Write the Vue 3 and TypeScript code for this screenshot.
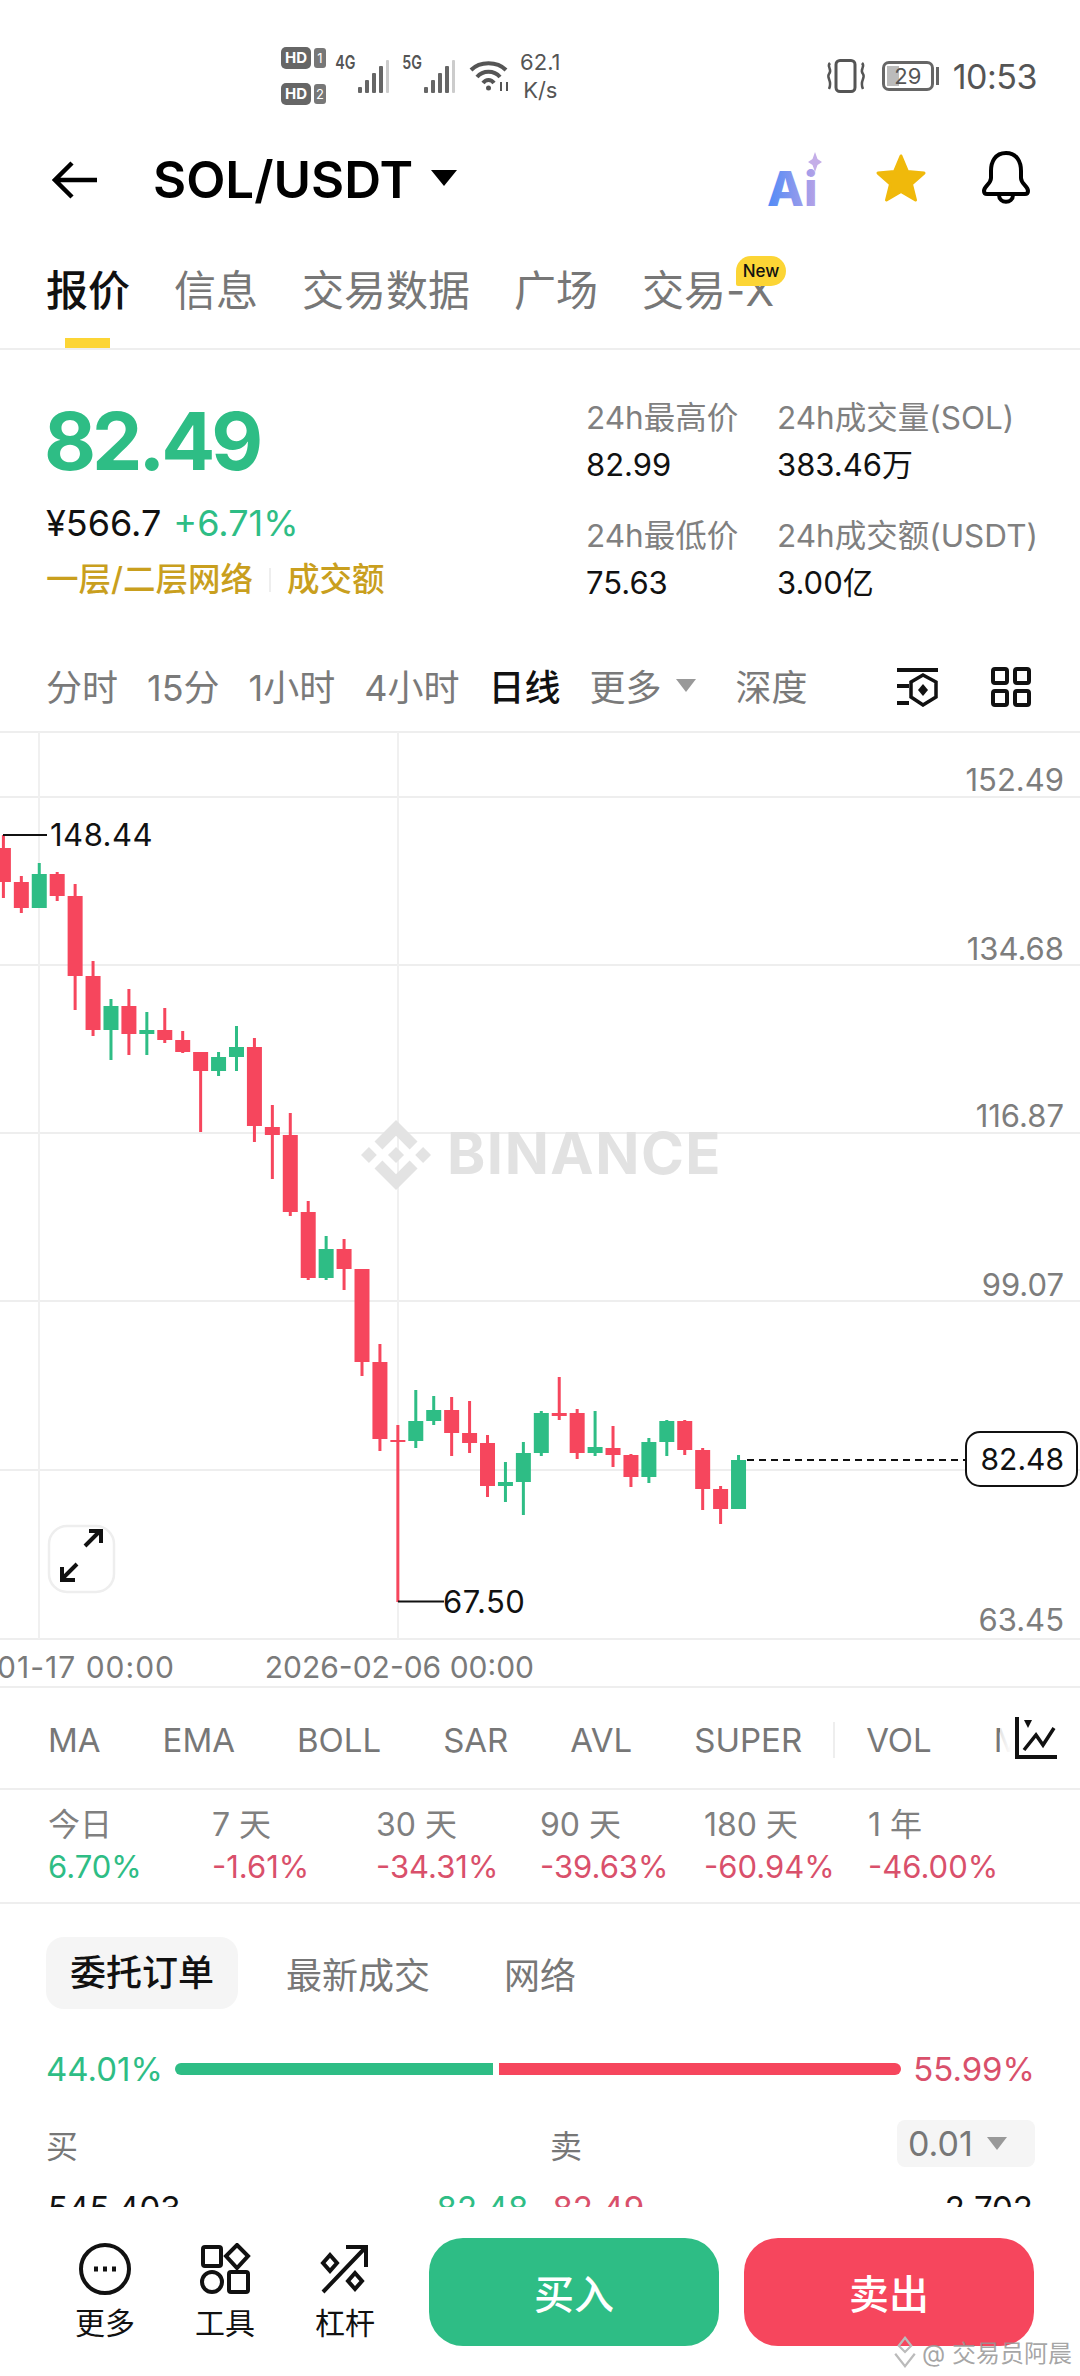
<script setup lang="ts">
type Candle = [number, number, number, number, number]

const tabs = ['报价', '信息', '交易数据', '广场', '交易-X']
const frames = ['分时', '15分', '1小时', '4小时', '日线']
const indicators = ['MA', 'EMA', 'BOLL', 'SAR', 'AVL', 'SUPER']
const periods = [
  { label: '今日', value: '6.70%', up: true },
  { label: '7 天', value: '-1.61%', up: false },
  { label: '30 天', value: '-34.31%', up: false },
  { label: '90 天', value: '-39.63%', up: false },
  { label: '180 天', value: '-60.94%', up: false },
  { label: '1 年', value: '-46.00%', up: false },
]
const stats = [
  { label: '24h最高价', value: '82.99' },
  { label: '24h成交量(SOL)', value: '383.46万' },
  { label: '24h最低价', value: '75.63' },
  { label: '24h成交额(USDT)', value: '3.00亿' },
]

const gridY = [797, 965, 1133, 1301, 1470, 1639]
const axis = [
  { y: 791, text: '152.49' },
  { y: 960, text: '134.68' },
  { y: 1127, text: '116.87' },
  { y: 1296, text: '99.07' },
  { y: 1631, text: '63.45' },
]

// high, body top, body bottom, low, 1 = green
const candles: Candle[] = [
  [835, 848, 882, 898, 0], [876, 882, 908, 913, 0], [863, 874, 908, 908, 1], [872, 874, 896, 901, 0],
  [884, 896, 976, 1010, 0], [961, 976, 1030, 1036, 0], [999, 1006, 1030, 1060, 1], [989, 1006, 1034, 1055, 0],
  [1012, 1030, 1034, 1055, 1], [1008, 1030, 1040, 1043, 0], [1031, 1040, 1052, 1053, 0], [1052, 1052, 1071, 1132, 0],
  [1052, 1057, 1071, 1076, 1], [1026, 1047, 1057, 1071, 1], [1038, 1047, 1126, 1142, 0], [1105, 1127, 1135, 1179, 0],
  [1113, 1135, 1212, 1216, 0], [1201, 1212, 1278, 1280, 0], [1236, 1249, 1278, 1280, 1], [1239, 1249, 1269, 1290, 0],
  [1269, 1269, 1362, 1376, 0], [1344, 1362, 1439, 1451, 0], [1425, 1440, 1442, 1602, 0], [1390, 1421, 1441, 1448, 1],
  [1396, 1410, 1421, 1425, 1], [1397, 1410, 1433, 1456, 0], [1401, 1433, 1443, 1453, 0], [1435, 1443, 1486, 1497, 0],
  [1462, 1482, 1486, 1502, 1], [1442, 1453, 1482, 1515, 1], [1411, 1413, 1453, 1456, 1], [1377, 1413, 1416, 1420, 0],
  [1409, 1413, 1453, 1459, 0], [1411, 1447, 1453, 1456, 1], [1426, 1448, 1455, 1467, 0], [1454, 1455, 1477, 1487, 0],
  [1438, 1442, 1477, 1483, 1], [1420, 1421, 1442, 1456, 1], [1420, 1421, 1450, 1455, 0], [1448, 1450, 1489, 1510, 0],
  [1486, 1489, 1509, 1524, 0], [1455, 1460, 1509, 1509, 1],
]
const cx = (i: number) => 3.4 + i * 17.93
const col = (c: Candle) => (c[4] ? '#2ebd85' : '#f6465d')
</script>

<template>
  <div class="page">
    <div class="main">
      <div class="status">
        <div class="hd-col">
          <div class="hd-row"><span class="hd">HD</span><span class="sim">1</span></div>
          <div class="hd-row"><span class="hd">HD</span><span class="sim">2</span></div>
        </div>
        <span class="net n1">4G</span>
        <svg class="bars" width="34" height="34" viewBox="0 0 32 34">
          <rect x="0" y="27" width="4" height="6" rx="1" fill="#666" />
          <rect x="7" y="20" width="4" height="13" rx="1" fill="#666" />
          <rect x="14" y="13" width="4" height="20" rx="1" fill="#666" />
          <rect x="21" y="6" width="4" height="27" rx="1" fill="#666" />
          <rect x="28" y="0" width="3" height="33" rx="1" fill="#ccc" />
        </svg>
        <span class="net n2">5G</span>
        <svg class="bars" width="34" height="34" viewBox="0 0 32 34">
          <rect x="0" y="27" width="4" height="6" rx="1" fill="#666" />
          <rect x="7" y="20" width="4" height="13" rx="1" fill="#666" />
          <rect x="14" y="13" width="4" height="20" rx="1" fill="#666" />
          <rect x="21" y="6" width="4" height="27" rx="1" fill="#666" />
          <rect x="28" y="0" width="3" height="33" rx="1" fill="#ccc" />
        </svg>
        <svg class="wifi" width="42" height="34" viewBox="0 0 42 34" fill="none" stroke="#555" stroke-width="4">
          <path d="M2 12C11 3 28 3 37 12" />
          <path d="M8 19C14 12 25 12 31 19" />
          <path d="M14 25C17 21 22 21 25 25" />
          <circle cx="19.500" cy="30" r="2.500" fill="#555" stroke="none" />
          <path d="M32 33V24M38 33V24" stroke-width="2" />
        </svg>
        <div class="speed"><span>62.1</span><span>K/s</span></div>
        <div class="status-right">
          <svg class="vib" width="42" height="34" viewBox="0 0 42 34" fill="none" stroke="#555" stroke-width="3">
            <rect x="11" y="1.500" width="19" height="31" rx="4" />
            <path d="M5 4C1 8 8 10 4 15C1 19 8 22 4 30M37 4C41 8 34 10 38 15C41 19 34 22 38 30" stroke-width="2.500" />
          </svg>
          <div class="battery">
            <span class="fill"></span>
            <span class="level">29</span>
          </div>
          <span class="cap"></span>
          <span class="time">10:53</span>
        </div>
      </div>

      <div class="header">
        <svg class="back" width="46" height="38" viewBox="0 0 46 38" fill="none" stroke="#000" stroke-width="4.500">
          <path d="M45 19H3M20 2L3 19L20 36" />
        </svg>
        <span class="pair">SOL/USDT</span>
        <span class="pair-caret"></span>
        <div class="header-icons">
          <svg width="60" height="56" viewBox="0 0 60 56">
            <defs>
              <linearGradient id="aiGrad" x1="0" x2="1" y1="0" y2="0">
                <stop offset="0" stop-color="#4f8bf7" />
                <stop offset="1" stop-color="#b8a2e6" />
              </linearGradient>
            </defs>
            <text x="0" y="54" class="ai-text" fill="url(#aiGrad)">Ai</text>
            <path d="M48 0L50.500 7L55 10L50.500 13L48 20L45.500 13L41 10L45.500 7Z" fill="#c4aee8" />
          </svg>
          <svg class="star" width="52" height="50" viewBox="0 0 52 50">
            <path d="M26 3L32.500 18.500L49 20L36.500 31L40.500 47L26 38.500L11.500 47L15.500 31L3 20L19.500 18.500Z" fill="#f0b90b" stroke="#f0b90b" stroke-width="3" stroke-linejoin="round" />
          </svg>
          <svg class="bell" width="50" height="54" viewBox="0 0 50 54" fill="none" stroke="#000" stroke-width="4">
            <path d="M25 2C14 2 10 11 10 20V27C10 33 3 35 3 40C3 42 4 43 6 43H44C46 43 47 42 47 40C47 35 40 33 40 27V20C40 11 36 2 25 2Z" />
            <path d="M18 44C18 53 32 53 32 44" />
          </svg>
        </div>
      </div>

      <div class="tabs">
        <div v-for="(t, i) in tabs" :key="t" class="tab" :class="{ active: i === 0 }">
          {{ t }}
          <span v-if="i === 4" class="new">New</span>
        </div>
      </div>

      <div class="stats">
        <div class="stats-left">
          <div class="price">82.49</div>
          <div class="sub"><span class="cny">¥566.7</span><span class="up">+6.71%</span></div>
          <div class="links"><span>一层/二层网络</span><i></i><span>成交额</span></div>
        </div>
        <div class="stats-right">
          <div v-for="s in stats" :key="s.label" class="stat">
            <span class="stat-label">{{ s.label }}</span>
            <span class="stat-value">{{ s.value }}</span>
          </div>
        </div>
      </div>

      <div class="frames">
        <span v-for="f in frames" :key="f" :class="{ current: f === '日线' }">{{ f }}</span>
        <span class="more">更多<em></em></span>
        <span class="depth">深度</span>
        <div class="frame-icons">
          <svg width="42" height="40" viewBox="0 0 42 40" fill="none" stroke="#111" stroke-width="4">
            <path d="M0 3H41M0 19H12M0 36H12" />
            <path d="M26 8L39 15V30L26 38L14 30V15Z" stroke-width="3.500" />
            <path d="M26 17L31 23L26 29L21 23Z" fill="#111" stroke="none" />
          </svg>
          <svg width="40" height="40" viewBox="0 0 40 40" fill="none" stroke="#111" stroke-width="4">
            <rect x="2" y="2" width="14" height="14" rx="2" />
            <rect x="24" y="2" width="14" height="14" rx="2" />
            <rect x="2" y="24" width="14" height="14" rx="2" />
            <rect x="24" y="24" width="14" height="14" rx="2" />
          </svg>
        </div>
      </div>

      <svg class="chart" width="1080" height="957" viewBox="0 731 1080 957">
        <path d="M0 732H1080M0 1687H1080" stroke="#eee" stroke-width="2" />
        <path v-for="y in gridY" :key="y" :d="`M0 ${y}H1080`" stroke="#eee" stroke-width="2" />
        <path d="M39 732V1639M398 732V1639" stroke="#f0f0f0" stroke-width="2" />

        <g fill="#e3e3e3" transform="translate(361 1120) scale(0.553)">
          <path d="M38.730 53.200l24.590-24.580 24.600 24.600 14.300-14.310L63.320 0 24.430 38.890z" />
          <path d="M0 63.310l14.300-14.310 14.310 14.310-14.310 14.300z" />
          <path d="M38.730 73.410l24.590 24.590 24.600-24.600 14.310 14.290-38.900 38.910-38.910-38.880z" />
          <path d="M98 63.310l14.300-14.310 14.310 14.300-14.310 14.320z" />
          <path d="M77.830 63.300L63.320 48.780 52.590 59.510l-1.240 1.230-2.540 2.540 14.510 14.500 14.510-14.470z" />
        </g>
        <text x="447" y="1174" class="wm">BINANCE</text>

        <g v-for="(c, i) in candles" :key="i">
          <rect :x="cx(i) - 1.500" :y="c[0]" width="3" :height="c[3] - c[0]" :fill="col(c)" />
          <rect :x="cx(i) - 7.500" :y="c[1]" width="15" :height="c[2] - c[1]" :fill="col(c)" />
        </g>

        <path d="M3 835H47" stroke="#111" stroke-width="2" />
        <text x="50" y="846" class="mark">148.44</text>
        <path d="M398 1601.500H444" stroke="#111" stroke-width="2" />
        <text x="443" y="1613" class="mark">67.50</text>

        <text v-for="a in axis" :key="a.text" x="1064" :y="a.y" class="axis">{{ a.text }}</text>
        <path d="M747 1460H965" stroke="#111" stroke-width="2" stroke-dasharray="7 5" />
        <rect x="966" y="1432" width="111" height="54" rx="14" fill="#fff" stroke="#111" stroke-width="2" />
        <text x="1064" y="1470" class="axis last">82.48</text>

        <rect x="49" y="1526" width="65" height="66" rx="18" fill="#fff" stroke="#eee" stroke-width="2.500" />
        <path d="M85 1554L100 1539M89 1539H101V1551M77 1572L62 1587M62 1575V1588H75" transform="translate(0 -8)" fill="none" stroke="#111" stroke-width="4" />

        <text x="175" y="1678" class="date wide" text-anchor="end">2026-01-17 00:00</text>
        <text x="534" y="1678" class="date" text-anchor="end">2026-02-06 00:00</text>
      </svg>

      <div class="indicators">
        <span v-for="n in indicators" :key="n">{{ n }}</span>
        <i class="sep"></i>
        <span>VOL</span>
        <span>MACD</span>
        <div class="ind-icon">
          <svg width="42" height="42" viewBox="0 0 42 42" fill="none" stroke="#111" stroke-width="3.500">
            <path d="M2 0V40H42" stroke-width="4" />
            <path d="M9 33L21 18L28 28L39 11" />
            <path d="M9 3H17L13 11Z" fill="#111" stroke="none" />
          </svg>
        </div>
      </div>

      <div class="periods">
        <div v-for="p in periods" :key="p.label" class="period">
          <span class="period-label">{{ p.label }}</span>
          <span class="period-value" :class="p.up ? 'up' : 'down'">{{ p.value }}</span>
        </div>
      </div>

      <div class="book-tabs">
        <span class="chip">委托订单</span>
        <span class="latest">最新成交</span>
        <span class="network">网络</span>
      </div>

      <div class="ratio">
        <span class="up">44.01%</span>
        <div class="ratio-bar"><i class="buy"></i><i class="sell"></i></div>
        <span class="down">55.99%</span>
      </div>

      <div class="book-head">
        <span class="h-buy">买</span>
        <span class="h-sell">卖</span>
        <span class="step">0.01<em></em></span>
      </div>

      <div class="book-row">
        <span class="qty">545.403</span>
        <span class="up bid">82.48</span>
        <span class="down ask">82.49</span>
        <span class="qty right">2.702</span>
      </div>
    </div>

    <div class="bottom">
      <div class="tool">
        <svg width="52" height="52" viewBox="0 0 52 52" fill="none" stroke="#111" stroke-width="4">
          <circle cx="26" cy="26" r="24" />
          <path d="M15 26H19M24 26H28M33 26H37" stroke-width="5" />
        </svg>
        <span>更多</span>
      </div>
      <div class="tool">
        <svg width="52" height="52" viewBox="0 0 52 52" fill="none" stroke="#111" stroke-width="4">
          <rect x="4" y="4" width="18" height="19" rx="2" />
          <path d="M38 2L49 13L38 25L27 13Z" />
          <circle cx="13" cy="39" r="10" />
          <rect x="30" y="29" width="19" height="20" rx="2" />
        </svg>
        <span>工具</span>
      </div>
      <div class="tool">
        <svg width="52" height="52" viewBox="0 0 52 52" fill="none" stroke="#111" stroke-width="4">
          <path d="M4 49L46 5M27 4H47V24" />
          <path d="M11 12L18 20L11 28L4 20Z" />
          <path d="M36 30L43 38L36 46L29 38Z" />
        </svg>
        <span>杠杆</span>
      </div>
      <div class="actions">
        <button class="action buy-btn">买入</button>
        <button class="action sell-btn">卖出</button>
      </div>
    </div>

    <div class="credit">
      <svg width="26" height="32" viewBox="0 0 28 36" fill="none" stroke="#bbb" stroke-width="2.500">
        <path d="M14 2L21 11L14 18L7 11ZM3 20L14 34L25 20" />
      </svg>
      <span>@ 交易员阿晨</span>
    </div>
  </div>
</template>

<style scoped>
.page {
  position: relative;
  width: 1080px;
  height: 2376px;
  overflow: hidden;
  background: #fff;
  color: #111;
  font-family: Inter, "Noto Sans CJK SC", sans-serif;
}

.main {
  height: 2207px;
  overflow: hidden;
}

.up {
  color: #2ebd85;
}

.down {
  color: #d9506b;
}

.status {
  display: flex;
  align-items: center;
  height: 152px;
  padding: 0 43px 0 281px;
  color: #555;
}

.hd-col {
  display: flex;
  flex-direction: column;
  gap: 14px;
}

.hd-row {
  display: flex;
  align-items: center;
  gap: 3px;
}

.hd {
  width: 30px;
  height: 22px;
  border-radius: 5px;
  background: #666;
  color: #fff;
  font-size: 15px;
  font-weight: 700;
  line-height: 22px;
  text-align: center;
}

.sim {
  width: 12px;
  height: 20px;
  border-radius: 3px;
  background: #777;
  color: #fff;
  font-size: 13px;
  line-height: 20px;
  text-align: center;
}

.net {
  font-size: 19px;
  font-weight: 600;
  transform: scaleX(0.75) translateY(-14px);
}

.n1 {
  margin-left: 6px;
}

.n2 {
  margin-left: 8px;
}

.bars {
  margin-left: -2px;
  margin-top: 2px;
}

.wifi {
  margin-left: 12px;
  margin-top: -2px;
}

.speed {
  display: flex;
  flex-direction: column;
  align-items: center;
  margin-left: 9px;
  font-size: 22px;
  line-height: 28px;
}

.status-right {
  display: flex;
  align-items: center;
  margin-left: auto;
}

.battery {
  position: relative;
  width: 52px;
  height: 30px;
  margin-left: 15px;
  border: 3px solid #666;
  border-radius: 7px;
  box-sizing: border-box;
  text-align: center;
}

.fill {
  position: absolute;
  left: 2px;
  top: 2px;
  bottom: 2px;
  width: 12px;
  background: #bbb;
}

.level {
  position: relative;
  font-size: 22px;
  line-height: 24px;
}

.cap {
  width: 3px;
  height: 18px;
  margin-left: 2px;
  background: #666;
}

.time {
  margin-left: 14px;
  font-size: 34px;
  letter-spacing: -0.5px;
}

.header {
  display: flex;
  align-items: center;
  height: 56px;
  padding-left: 52px;
}

.pair {
  margin-left: 55px;
  font-size: 51px;
  font-weight: 600;
  line-height: 56px;
  color: #000;
}

.pair-caret {
  width: 0;
  height: 0;
  margin-left: 18px;
  margin-bottom: 4px;
  border-left: 13px solid transparent;
  border-right: 13px solid transparent;
  border-top: 16px solid #000;
}

.header-icons {
  display: flex;
  align-items: center;
  margin-left: auto;
  padding-right: 49px;
}

.ai-text {
  font-size: 48px;
  font-weight: 800;
}

.star {
  margin-left: 48px;
  margin-top: -4px;
}

.bell {
  margin-left: 54px;
  margin-top: -4px;
}

.tabs {
  display: flex;
  gap: 44px;
  height: 82px;
  padding: 58px 0 0 46px;
  border-bottom: 2px solid #eee;
  font-size: 42px;
  line-height: 50px;
  color: #777;
}

.tab {
  position: relative;
  height: 82px;
}

.tab.active {
  color: #111;
  font-weight: 500;
}

.tab.active::after {
  content: "";
  position: absolute;
  left: 19px;
  width: 45px;
  bottom: 0;
  height: 10px;
  background: #fcd535;
}

.new {
  position: absolute;
  right: -12px;
  top: -10px;
  width: 50px;
  height: 30px;
  border-radius: 15px 15px 15px 2px;
  background: #fcd535;
  color: #111;
  font-size: 17px;
  font-weight: 500;
  line-height: 30px;
  text-align: center;
}

.stats {
  display: flex;
  height: 293px;
  padding-left: 46px;
  box-sizing: border-box;
}

.stats-left {
  width: 540px;
  padding-top: 51px;
}

.price {
  height: 80px;
  margin-left: -2px;
  color: #2ebd85;
  font-size: 80px;
  font-weight: 700;
  line-height: 80px;
  letter-spacing: -4px;
}

.sub {
  display: flex;
  gap: 12px;
  margin-top: 20px;
  font-size: 36px;
  line-height: 44px;
}

.links {
  display: flex;
  align-items: center;
  margin-top: 15px;
  color: #c99f1e;
  font-size: 32.500px;
  font-weight: 500;
  line-height: 40px;
}

.links i {
  width: 2px;
  height: 24px;
  margin: 0 16px;
  background: #eee;
}

.stats-right {
  display: grid;
  grid-template-columns: 191px auto;
  grid-auto-rows: 87px;
  row-gap: 31px;
  padding-top: 48px;
}

.stat {
  display: flex;
  flex-direction: column;
  gap: 7px;
}

.stat-label {
  color: #808080;
  font-size: 31.500px;
  line-height: 40px;
  white-space: nowrap;
}

.stat-value {
  font-size: 31px;
  line-height: 40px;
  white-space: nowrap;
}

.frames {
  display: flex;
  align-items: center;
  gap: 29px;
  height: 88px;
  padding: 0 0 4px 46px;
  color: #7a7a7a;
  font-size: 36px;
  box-sizing: border-box;
}

.frames .current {
  color: #111;
  font-weight: 500;
}

.more {
  display: flex;
  align-items: center;
  gap: 14px;
}

.more em,
.step em {
  width: 0;
  height: 0;
  border-left: 10px solid transparent;
  border-right: 10px solid transparent;
  border-top: 13px solid #999;
}

.depth {
  margin-left: 11px;
}

.frame-icons {
  display: flex;
  gap: 52px;
  margin: 4px 0 0 auto;
  padding-right: 49px;
}

.chart {
  display: block;
}

.wm {
  fill: #e2e2e2;
  font-size: 58px;
  font-weight: 700;
  letter-spacing: 1.500px;
}

.mark {
  fill: #111;
  font-size: 31px;
  letter-spacing: 0.5px;
}

.axis {
  fill: #7d7d7d;
  font-size: 31px;
  text-anchor: end;
}

.axis.last {
  fill: #111;
  font-size: 30px;
}

.date {
  fill: #7a7a7a;
  font-size: 30px;
}

.date.wide {
  letter-spacing: 1px;
}

.indicators {
  position: relative;
  display: flex;
  align-items: center;
  gap: 62px;
  height: 102px;
  padding: 3px 0 0 48px;
  overflow: hidden;
  border-bottom: 2px solid #eee;
  box-sizing: border-box;
  color: #777;
  font-size: 33px;
  white-space: nowrap;
}

.sep {
  flex: none;
  width: 2px;
  height: 36px;
  margin: 0 -31px;
  background: #eee;
}

.ind-icon {
  position: absolute;
  top: 29px;
  right: 0;
  width: 80px;
  height: 50px;
  padding-left: 15px;
  background: linear-gradient(90deg, rgba(255, 255, 255, 0.8), #fff 12px);
  box-sizing: border-box;
}

.periods {
  display: grid;
  grid-template-columns: repeat(6, 164px);
  height: 114px;
  padding: 15px 0 0 48px;
  border-bottom: 2px solid #eee;
  box-sizing: border-box;
}

.period {
  display: flex;
  flex-direction: column;
  gap: 5px;
}

.period-label {
  color: #808080;
  font-size: 32px;
  line-height: 40px;
}

.period-value {
  font-size: 31px;
  line-height: 34px;
  white-space: nowrap;
}

.book-tabs {
  display: flex;
  align-items: center;
  height: 72px;
  margin-top: 33px;
  margin-bottom: 1px;
  padding-left: 46px;
  color: #777;
  font-size: 36px;
}

.chip {
  padding: 0 24px;
  border-radius: 18px;
  background: #f5f5f5;
  color: #111;
  font-weight: 500;
  line-height: 72px;
}

.latest {
  margin-left: 48px;
}

.network {
  margin-left: 74px;
}

.ratio {
  display: flex;
  align-items: center;
  gap: 12px;
  height: 40px;
  margin-top: 40px;
  padding: 0 45px 0 46px;
  font-size: 33px;
}

.ratio-bar {
  display: flex;
  flex: 1;
  gap: 6px;
  height: 12px;
}

.ratio-bar .buy {
  width: 318px;
  border-radius: 6px 0 0 6px;
  background: #2ebd85;
}

.ratio-bar .sell {
  flex: 1;
  border-radius: 0 6px 6px 0;
  background: #f6465d;
}

.book-head {
  display: flex;
  align-items: center;
  height: 47px;
  margin-top: 31px;
  padding: 0 45px 0 46px;
  color: #777;
  font-size: 32px;
}

.h-sell {
  margin-left: 472px;
}

.step {
  display: flex;
  align-items: center;
  gap: 14px;
  width: 138px;
  height: 47px;
  margin-left: auto;
  padding-left: 11px;
  border-radius: 8px;
  background: #f5f5f5;
  font-size: 34px;
  box-sizing: border-box;
}

.book-row {
  display: flex;
  align-items: center;
  height: 36px;
  margin-top: 23px;
  padding: 0 47px 0 48px;
  font-size: 33px;
  line-height: 36px;
}

.bid {
  margin-left: 256px;
}

.ask {
  margin-left: 24px;
}

.right {
  margin-left: auto;
}

.bottom {
  display: flex;
  height: 169px;
  padding: 31px 46px 0 55px;
  box-sizing: border-box;
}

.tool {
  display: flex;
  flex-direction: column;
  align-items: center;
  width: 100px;
  margin-right: 20px;
  padding-top: 5px;
  font-size: 30px;
  line-height: 40px;
}

.tool span {
  margin-top: 8px;
}

.actions {
  display: flex;
  gap: 25px;
  margin-left: auto;
}

.action {
  width: 290px;
  height: 108px;
  border: none;
  border-radius: 34px;
  color: #fff;
  font-family: inherit;
  font-size: 40px;
  font-weight: 500;
}

.buy-btn {
  background: #2ebd85;
}

.sell-btn {
  background: #f6465d;
}

.credit {
  position: absolute;
  right: 8px;
  top: 2334px;
  display: flex;
  align-items: center;
  gap: 4px;
  color: rgba(150, 150, 150, 0.85);
  font-size: 24px;
}
</style>
